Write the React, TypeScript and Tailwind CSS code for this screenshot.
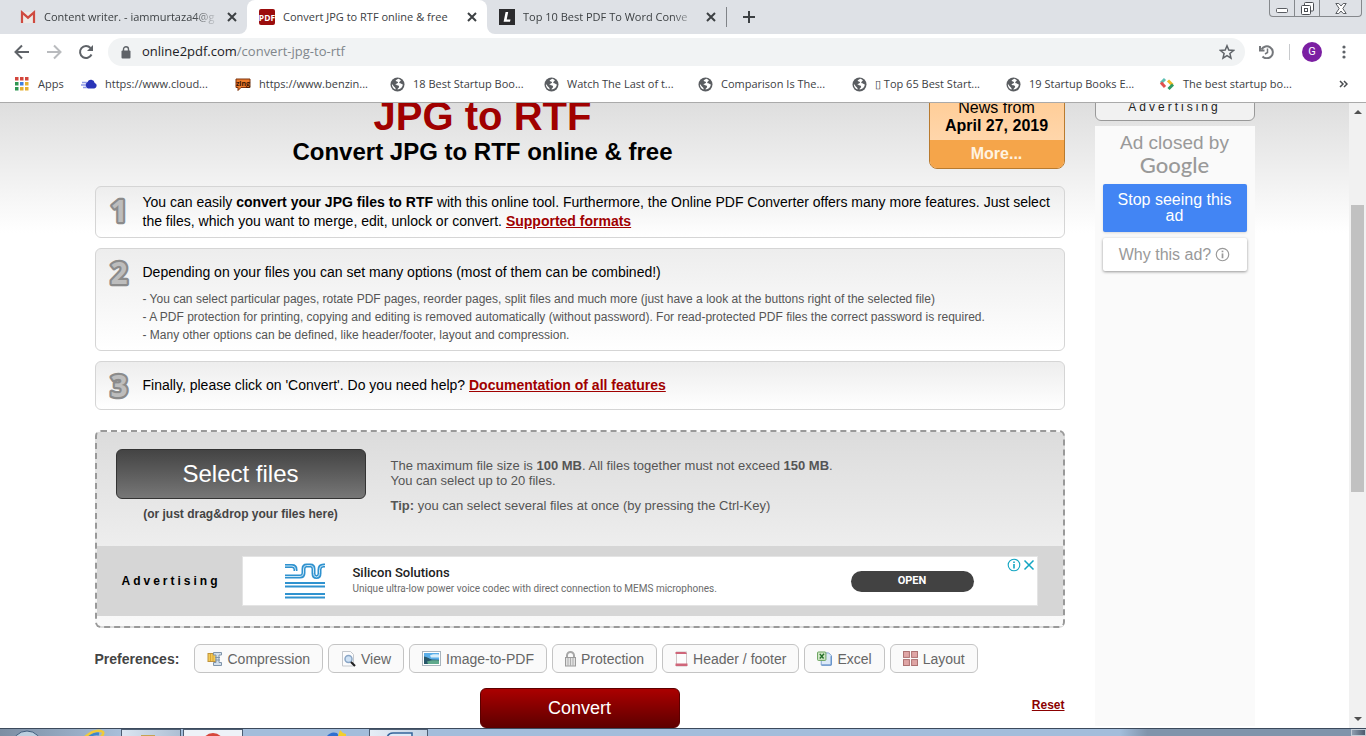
import type { ReactNode } from "react";

const strokeProps = {
  fill: "none",
  stroke: "currentColor",
  strokeWidth: 2,
} as const;

function CloseIcon() {
  return (
    <svg width="10" height="10" viewBox="0 0 10 10" {...strokeProps}>
      <path d="M1 1l8 8M9 1l-8 8" />
    </svg>
  );
}

function GmailIcon() {
  return (
    <svg width="16" height="16" viewBox="0 0 16 16">
      <path d="M1 3h14v11H1z" fill="#ece9e6" />
      <path d="M2 14V3.5l6 5.2 6-5.2V14" fill="none" stroke="#cf4a40" strokeWidth="2.2" />
    </svg>
  );
}

function PdfIcon() {
  return (
    <svg width="16" height="16" viewBox="0 0 16 16">
      <rect width="16" height="16" rx="2" fill="#9b0d0d" />
      <text x="8" y="11.5" fontSize="8.5" fontWeight="700" fill="#fff" textAnchor="middle" fontFamily="Open Sans, sans-serif">
        PDF
      </text>
    </svg>
  );
}

function LIcon() {
  return (
    <svg width="16" height="16" viewBox="0 0 16 16">
      <rect width="16" height="16" fill="#2b2b2d" />
      <path d="M6.6 3h2.6L7.7 10.6h3.8l-.5 2.2H4.6z" fill="#fff" />
    </svg>
  );
}

function GlobeIcon() {
  return (
    <svg width="15" height="15" viewBox="0 0 15 15">
      <circle cx="7.5" cy="7.5" r="7" fill="#5a5d61" />
      <path
        d="M8.2 1.8c-1 .7-2.4.9-2.6 2.200.8.7 2 .3 2.400 1.300.2 1.100-1.400 1.100-2.200 1.800-.6.8.5 1.200 1.300 1.200 1.300 0 2.400.8 1.900 2-.4.9-1.500 1-1.500 2.100 3-.2 5.200-2.400 5.400-5-.9.1-1.500-.5-2-.9-.6-.6-1.600-.3-1.700-1.100 0-.9 1.200-1.200 1.700-1.700C10.500 2.700 9.300 2.100 8.200 1.800zM1.900 7c-.2 2.600 1.400 4.900 3.700 5.600.3-1.200-.3-2-1.200-2.700C3.400 9 3 7.800 1.900 7z"
        fill="#fff"
      />
    </svg>
  );
}

function CloudIcon() {
  return (
    <svg width="16" height="12" viewBox="0 0 16 12">
      <path d="M7 10.500a3.500 3.500 0 0 1-.5-6.500 3.800 3.800 0 0 1 7.200.9 2.900 2.900 0 0 1-.4 5.600z" fill="#2a35b8" />
      <path d="M1 4.500h5M0 7h5M2 9.500h4" stroke="#8f9be6" strokeWidth="1.500" />
    </svg>
  );
}

function BenzingaIcon() {
  return (
    <svg width="16" height="13" viewBox="0 0 16 13">
      <path d="M1 1h14v8.500H6l-3 3V9.500H1z" fill="#ee7b2a" stroke="#7a3411" />
      <text x="8" y="8" fontSize="7" fontWeight="700" fill="#3a1503" textAnchor="middle" fontFamily="Open Sans, sans-serif">
        zing
      </text>
    </svg>
  );
}

function ChevronsIcon() {
  return (
    <svg width="16" height="14" viewBox="0 0 16 14" fill="none" strokeWidth="3">
      <path d="M6 2L2 6" stroke="#5fc0b4" />
      <path d="M2 5.500l4 4.500" stroke="#e2504e" />
      <path d="M9 3.500l4.500 4.500" stroke="#efb928" />
      <path d="M14 7.500L9.500 12" stroke="#2f9a63" />
    </svg>
  );
}

function AppsIcon() {
  const colors = ["#d3453b", "#d3453b", "#d3453b", "#2f9652", "#3f7fe0", "#e6b030", "#2f9652", "#e6b030", "#e6b030"];
  return (
    <svg width="14" height="14" viewBox="0 0 14 14">
      {colors.map((c, i) => (
        <rect key={i} x={(i % 3) * 5} y={Math.floor(i / 3) * 5} width="3.500" height="3.500" fill={c} />
      ))}
    </svg>
  );
}

function InfoIcon({ size }: { size: number }) {
  return (
    <svg width={size} height={size} viewBox="0 0 14 14" fill="none" stroke="currentColor">
      <circle cx="7" cy="7" r="5.800" strokeWidth="1.100" />
      <path d="M7 6v4.500" strokeWidth="1.600" />
      <path d="M7 3.400v1.500" strokeWidth="1.600" />
    </svg>
  );
}

function Tab({ icon, title, active, fade }: { icon: ReactNode; title: string; active?: boolean; fade?: boolean }) {
  return (
    <div
      className={
        active
          ? "flex h-full w-full items-center rounded-t-lg bg-white pr-2.5 pl-3"
          : "flex h-full w-[239px] items-center pr-2.5 pl-3"
      }
    >
      <span className="shrink-0">{icon}</span>
      <span
        className={
          fade
            ? "ml-2 min-w-0 flex-1 whitespace-nowrap [mask-image:linear-gradient(to_right,black_85%,transparent)]"
            : "ml-2 min-w-0 flex-1 whitespace-nowrap"
        }
      >
        {title}
      </span>
      <button aria-label={"Close " + title} className="ml-2 shrink-0 text-[#3c4043]">
        <CloseIcon />
      </button>
    </div>
  );
}

const bookmarks: { label: string; icon: ReactNode }[] = [
  { label: "https://www.cloud...", icon: <CloudIcon /> },
  { label: "https://www.benzin...", icon: <BenzingaIcon /> },
  { label: "18 Best Startup Boo...", icon: <GlobeIcon /> },
  { label: "Watch The Last of t...", icon: <GlobeIcon /> },
  { label: "Comparison Is The...", icon: <GlobeIcon /> },
  { label: "▯ Top 65 Best Start...", icon: <GlobeIcon /> },
  { label: "19 Startup Books E...", icon: <GlobeIcon /> },
  { label: "The best startup bo...", icon: <ChevronsIcon /> },
];

function BrowserChrome() {
  return (
    <header className="shrink-0 border-b border-[#aaaaaa] bg-white font-['Open_Sans',sans-serif] text-[11px] text-[#3c4043]">
      <div className="flex h-[34px] items-center">
        <div className="flex h-full w-[247px] shrink-0 rounded-br-lg bg-[#dee1e6] pl-2">
          <Tab icon={<GmailIcon />} title="Content writer. - iammurtaza4@g" fade />
        </div>
        <div className="h-full w-[240px] shrink-0 bg-[#dee1e6]">
          <Tab icon={<PdfIcon />} title="Convert JPG to RTF online & free" active />
        </div>
        <div className="flex h-full flex-1 items-center rounded-bl-lg bg-[#dee1e6]">
          <Tab icon={<LIcon />} title="Top 10 Best PDF To Word Conve" fade />
          <span className="h-5 w-px bg-[#808388]" />
          <button aria-label="New tab" className="ml-4">
            <svg width="12" height="12" viewBox="0 0 12 12" {...strokeProps}>
              <path d="M6 0v12M0 6h12" />
            </svg>
          </button>
          <div className="mr-1 ml-auto flex h-[17px] self-start rounded-b border border-t-0 border-[#85888c]">
            <button aria-label="Minimize" className="flex w-[25px] items-center justify-center border-r border-[#85888c] pt-1">
              <svg width="12" height="5" viewBox="0 0 12 5">
                <rect x=".5" y=".5" width="11" height="4" rx="1" fill="#fff" stroke="#5a5d62" />
              </svg>
            </button>
            <button aria-label="Restore" className="flex w-[25px] items-center justify-center border-r border-[#85888c]">
              <svg width="13" height="13" viewBox="0 0 13 13" fill="#fff" stroke="#4a4d52">
                <rect x="3.500" y=".5" width="9" height="8.500" rx="1" />
                <rect x=".5" y="3.500" width="9" height="9" rx="1" />
                <rect x="3.500" y="6.500" width="3" height="3" />
              </svg>
            </button>
            <button aria-label="Close window" className="flex w-[41px] items-center justify-center">
              <svg width="12" height="11" viewBox="0 0 12 11" fill="#fff" stroke="#5a5d62">
                <path d="M.8.5h3L6 3 8.200.5h3L7.800 5.500l3.400 5h-3L6 8l-2.200 2.500h-3l3.400-5z" />
              </svg>
            </button>
          </div>
        </div>
      </div>

      <div className="flex h-9 items-center pl-[14px] text-[#5f6368]">
        <button aria-label="Back">
          <svg width="16" height="16" viewBox="0 0 16 16" {...strokeProps}>
            <path d="M15 8H2M8 1.500L1.500 8 8 14.500" />
          </svg>
        </button>
        <button aria-label="Forward" className="ml-4 text-[#b9bbbe]">
          <svg width="16" height="16" viewBox="0 0 16 16" {...strokeProps}>
            <path d="M1 8h13M8 1.500L14.500 8 8 14.500" />
          </svg>
        </button>
        <button aria-label="Reload" className="ml-4">
          <svg width="16" height="16" viewBox="0 0 16 16">
            <path d="M13.500 10.500A6 6 0 1 1 12.500 4" fill="none" stroke="currentColor" strokeWidth="2" />
            <path d="M15 1v6H9z" fill="currentColor" />
          </svg>
        </button>
        <div className="ml-3.5 flex h-7 min-w-0 flex-1 items-center rounded-full bg-[#f1f3f4] pr-2.5 pl-[13px]">
          <svg width="10" height="13" viewBox="0 0 10 13">
            <rect x=".5" y="4.500" width="9" height="8" rx="1" fill="#5f6368" />
            <path d="M2.500 5V3.200a2.500 2.500 0 0 1 5 0V5" fill="none" stroke="#5f6368" strokeWidth="1.400" />
          </svg>
          <a href="#address" className="ml-[11px] flex-1 text-[13px] text-[#80868b]">
            <span className="text-[#202124]">online2pdf.com</span>/convert-jpg-to-rtf
          </a>
          <button aria-label="Bookmark this page">
            <svg width="16" height="16" viewBox="0 0 16 16" fill="none" stroke="currentColor" strokeWidth="1.500">
              <path d="M8 1.800l1.800 4.300 4.700.4-3.600 3 1.100 4.600L8 11.700l-4 2.400 1.100-4.600-3.600-3 4.700-.4z" />
            </svg>
          </button>
        </div>
        <button aria-label="History" className="ml-3.5">
          <svg width="16" height="14" viewBox="0 0 16 14" fill="none" stroke="#74777b" strokeWidth="2">
            <path d="M2.500 4.500A6 6 0 1 1 3.500 11.500" />
            <path d="M1 1v4.500h4.500" />
            <path d="M8.500 3.500V7.500l-2.500 1.500" strokeWidth="1.500" />
          </svg>
        </button>
        <span className="ml-3.5 h-4 w-px bg-[#c8cacd]" />
        <span className="ml-3 flex size-5 items-center justify-center rounded-full bg-[#7b1fa2] font-['Roboto',sans-serif] text-[11px] text-white">
          G
        </span>
        <button aria-label="Menu" className="mr-5 ml-5">
          <svg width="4" height="14" viewBox="0 0 4 14" fill="#5f6368">
            <circle cx="2" cy="2" r="1.600" />
            <circle cx="2" cy="7" r="1.600" />
            <circle cx="2" cy="12" r="1.600" />
          </svg>
        </button>
      </div>

      <nav className="flex h-8 items-center pb-1 pl-[15px] whitespace-nowrap">
        <a href="#apps" className="flex w-[66px] shrink-0 items-center gap-[9px]">
          <AppsIcon />
          Apps
        </a>
        {bookmarks.map((b) => (
          <a key={b.label} href="#bookmark" className="flex w-[154px] shrink-0 items-center gap-2">
            <span className="flex w-4 justify-center">{b.icon}</span>
            {b.label}
          </a>
        ))}
        <button aria-label="More bookmarks" className="mr-[18px] ml-auto">
          <svg width="9" height="8" viewBox="0 0 9 8" fill="none" stroke="#4a4d51" strokeWidth="1.500">
            <path d="M1 1l3 3-3 3M5 1l3 3-3 3" />
          </svg>
        </button>
      </nav>
    </header>
  );
}

function Step({ number, children }: { number: string; children: ReactNode }) {
  return (
    <section className="flex rounded-md border border-[#d5d5d5] bg-linear-to-b from-[#ededed] to-white">
      <svg width="24" height="30" viewBox="0 0 24 30" className="mt-[9px] ml-[11px] shrink-0">
        <text
          x="12"
          y="26"
          fontSize="30"
          fontWeight="700"
          textAnchor="middle"
          fontFamily="Open Sans, sans-serif"
          fill="#bdbdbd"
          stroke="#8b8b8b"
          strokeWidth="4.500"
          strokeLinejoin="round"
          paintOrder="stroke"
        >
          {number}
        </text>
      </svg>
      <div className="ml-3 flex-1 pr-2.5 text-sm leading-[19px]">{children}</div>
    </section>
  );
}

function RedLink({ children }: { children: ReactNode }) {
  return (
    <a href="#more" className="font-bold text-[#a00000] underline">
      {children}
    </a>
  );
}

const preferences: { label: string; icon: ReactNode }[] = [
  {
    label: "Compression",
    icon: (
      <svg width="16" height="16" viewBox="0 0 16 16">
        <rect x="1" y="2.500" width="10" height="8" fill="#f3ca56" stroke="#c0933a" />
        <path d="M3.500 3v7M6 3v7" stroke="#d9a436" />
        <path d="M6.500 1.500h8v2.500h-2.500v7.500h2.500v3h-8v-3H9V4H6.500z" fill="#d3e0ec" stroke="#8094aa" />
        <path d="M8 6.500h5M8 9h5" stroke="#8094aa" />
      </svg>
    ),
  },
  {
    label: "View",
    icon: (
      <svg width="15" height="16" viewBox="0 0 15 16">
        <path d="M1.500.5h8l3 3v11.500h-11z" fill="#fbfbfc" stroke="#c3c7cc" />
        <circle cx="7.500" cy="8" r="3.500" fill="#cfe2f5" stroke="#8aa6c6" strokeWidth="1.500" />
        <path d="M10 11l4 4" stroke="#222" strokeWidth="2.200" />
      </svg>
    ),
  },
  {
    label: "Image-to-PDF",
    icon: (
      <svg width="19" height="15" viewBox="0 0 19 15">
        <rect x=".5" y=".5" width="18" height="14" fill="#fff" stroke="#a9b4bd" />
        <rect x="2" y="2" width="15" height="11" fill="#5aaee8" />
        <path d="M8 4.500c2-1.500 5-1.500 9-1v3H9z" fill="#d9effb" />
        <path d="M2 5.500c3 0 5 2.500 8 3l7 .3V13H2z" fill="#27576a" />
        <path d="M5 10.500c4-1.500 8-1.500 12-1V13H6z" fill="#5fa98c" />
      </svg>
    ),
  },
  {
    label: "Protection",
    icon: (
      <svg width="11" height="16" viewBox="0 0 11 16" fill="none">
        <path d="M2 8V4.500a3.500 3.500 0 0 1 7 0V8" stroke="#a7a7a7" strokeWidth="2" />
        <rect x=".5" y="6.500" width="10" height="8.500" fill="#e2e2e2" stroke="#9a9a9a" />
        <path d="M3 7v8M5.500 7v8M8 7v8" stroke="#adadad" />
      </svg>
    ),
  },
  {
    label: "Header / footer",
    icon: (
      <svg width="13" height="16" viewBox="0 0 13 16">
        <rect x="1.500" y="1" width="10" height="14" fill="#fcfcfc" stroke="#d0c4c6" />
        <path d="M.5 1h10l1.500 2H.5zM.5 12.500h12V15H.5z" fill="#cf6579" />
      </svg>
    ),
  },
  {
    label: "Excel",
    icon: (
      <svg width="15" height="16" viewBox="0 0 16 16">
        <path d="M4.500 1.500h8l3 3v10h-11z" fill="#dce9f8" stroke="#7ba0cf" />
        <path d="M5 14.500h10M15 5v9" stroke="#4f83c4" />
        <rect x=".5" y=".5" width="9" height="9" rx="1" fill="#cfe6c6" stroke="#64a058" />
        <path d="M3 2.500l4 5M7.500 2.500L3 7.500" stroke="#25702a" strokeWidth="1.500" />
      </svg>
    ),
  },
  {
    label: "Layout",
    icon: (
      <svg width="15" height="15" viewBox="0 0 15 15" fill="#dfa5a5" stroke="#ad7272">
        <rect x=".5" y=".5" width="5.900" height="5.900" />
        <rect x="8.600" y=".5" width="5.900" height="5.900" />
        <rect x=".5" y="8.600" width="5.900" height="5.900" />
        <rect x="8.600" y="8.600" width="5.900" height="5.900" />
      </svg>
    ),
  },
];

function SiliconLogo() {
  return (
    <svg width="40" height="36" viewBox="0 0 40 36" fill="none" stroke="#2f92cf">
      <g strokeWidth="4">
        <path d="M0 3h7q3.500 0 3.500 3.500V8" />
        <path d="M0 13.500h15q3.500 0 3.500-3.500V6q0-3.500 3-3.500h4q3 0 3 3.500v4.500q0 3.500 3 3.500t3-3.500V6.500q0-4 4-4h1.500" />
      </g>
      <g stroke="#cbe6f6" strokeWidth="1">
        <path d="M0 3h7q3.500 0 3.500 3.500V8" />
        <path d="M0 13.500h15q3.500 0 3.500-3.500V6q0-3.500 3-3.500h4q3 0 3 3.500v4.500q0 3.500 3 3.500t3-3.500V6.500q0-4 4-4h1.500" />
      </g>
      <path d="M0 20h40M0 23.500h40M0 31h40M0 34.500h40" strokeWidth="2" />
    </svg>
  );
}

function DropZone() {
  return (
    <section className="mt-5 rounded-md border-2 border-dashed border-[#999999] bg-linear-to-b from-[#dcdcdc] to-[#fafafa] pb-2.5">
      <div className="flex h-[114px] pt-[17px] pl-[19px]">
        <div className="w-[250px] shrink-0 text-center">
          <button className="h-[50px] w-full rounded-md border border-[#333333] bg-linear-to-b from-[#444444] to-[#777777] text-2xl text-white">
            Select files
          </button>
          <p className="mt-[7px] text-xs leading-4 font-bold text-[#444444]">(or just drag&amp;drop your files here)</p>
        </div>
        <div className="ml-[25px] pt-[9px] text-[13px] leading-[15px] text-[#555555]">
          <p>
            The maximum file size is <b>100 MB</b>. All files together must not exceed <b>150 MB</b>.
          </p>
          <p>You can select up to 20 files.</p>
          <p className="mt-2.5">
            <b>Tip:</b> you can select several files at once (by pressing the Ctrl-Key)
          </p>
        </div>
      </div>
      <div className="flex items-center bg-[#d6d6d6] py-2.5 pr-[25px] pl-[25px]">
        <span className="w-[120px] shrink-0 text-xs font-bold tracking-[3px] text-black">Advertising</span>
        <div className="flex h-[50px] flex-1 items-center border border-[#e4e4e4] bg-white pl-[42px] font-['Roboto',sans-serif]">
          <SiliconLogo />
          <div className="ml-7 w-[498px]">
            <p className="text-[13px] leading-4 font-medium text-[#212121]">Silicon Solutions</p>
            <p className="text-[10px] leading-4 text-[#6b6b6b]">
              Unique ultra-low power voice codec with direct connection to MEMS microphones.
            </p>
          </div>
          <button className="h-[21px] w-[123px] rounded-full bg-[#424242] text-[11px] font-bold text-white">OPEN</button>
          <div className="mr-0.5 ml-auto flex items-center gap-0.5 self-start pt-px text-[#12a5c2]">
            <button aria-label="Ad information">
              <InfoIcon size={14} />
            </button>
            <button aria-label="Close ad">
              <svg width="12" height="12" viewBox="0 0 12 12" fill="none" stroke="currentColor" strokeWidth="1.500">
                <path d="M1.500 1.500l9 9M10.500 1.500l-9 9" />
              </svg>
            </button>
          </div>
        </div>
      </div>
    </section>
  );
}

function Converter() {
  return (
    <main className="w-[970px]">
      <div className="mb-[17px] flex">
        <div className="flex-1 pt-3.5 text-center font-bold">
          <h1 className="text-[40px] leading-[44px] text-[#a00000]">JPG to RTF</h1>
          <h2 className="text-2xl leading-7 text-black">Convert JPG to RTF online &amp; free</h2>
        </div>
        <aside className="ml-[58px] w-[136px] overflow-hidden rounded-lg border border-[#b97a2e] bg-linear-to-b from-[#ffc98e] to-[#ffdcb8] text-center text-base leading-[18px] text-black">
          <div className="pt-[18px] pb-[5px]">
            <p>News from</p>
            <p className="font-bold">April 27, 2019</p>
          </div>
          <a href="#news" className="block bg-[#f5a54a] leading-7 font-bold text-[#fff3e2]">
            More...
          </a>
        </aside>
      </div>

      <div className="flex flex-col gap-2.5">
        <Step number="1">
          <p className="py-1.5">
            You can easily <b>convert your JPG files to RTF</b> with this online tool. Furthermore, the Online PDF
            Converter offers many more features. Just select the files, which you want to merge, edit, unlock or
            convert. <RedLink>Supported formats</RedLink>
          </p>
        </Step>
        <Step number="2">
          <p className="pt-3.5">Depending on your files you can set many options (most of them can be combined!)</p>
          <ul className="pt-2 pb-1.5 text-xs leading-[18px] text-[#555555]">
            <li>
              - You can select particular pages, rotate PDF pages, reorder pages, split files and much more (just have a
              look at the buttons right of the selected file)
            </li>
            <li>
              - A PDF protection for printing, copying and editing is removed automatically (without password). For
              read-protected PDF files the correct password is required.
            </li>
            <li>- Many other options can be defined, like header/footer, layout and compression.</li>
          </ul>
        </Step>
        <Step number="3">
          <p className="py-3.5">
            Finally, please click on 'Convert'. Do you need help? <RedLink>Documentation of all features</RedLink>
          </p>
        </Step>
      </div>

      <DropZone />

      <div className="mt-4 flex items-center gap-[5px] text-sm leading-[18px]">
        <span className="w-[94px] font-bold text-[#444444]">Preferences:</span>
        {preferences.map((p) => (
          <button
            key={p.label}
            className="flex h-[29px] items-center gap-[5px] rounded-md border border-[#c4c4c4] bg-[#fafafa] px-3 whitespace-nowrap text-[#666666]"
          >
            {p.icon}
            {p.label}
          </button>
        ))}
      </div>

      <div className="mt-[15px] flex items-start">
        <span className="flex-1" />
        <button className="h-10 w-[200px] rounded-md border border-[#5c0000] bg-linear-to-b from-[#ab0000] to-[#5f0000] text-lg text-white">
          Convert
        </button>
        <a href="#reset" className="flex-1 pt-[9px] text-right text-xs leading-4 font-bold text-[#8b0000] underline">
          Reset
        </a>
      </div>
    </main>
  );
}

function Sidebar() {
  return (
    <aside className="flex w-40 flex-col text-center">
      <div className="rounded-b-md border border-[#999999] bg-[#f1f1f1] pt-[18px] pb-[5px] text-xs leading-4 tracking-[3px] text-[#222222]">
        Advertising
      </div>
      <div className="mt-[5px] h-[600px] bg-[#fafafa] px-2 pt-1.5 text-[#999999]">
        <p className="text-[19px] leading-[22px]">Ad closed by</p>
        <p className="font-['Lato',sans-serif] text-[22px] leading-[22px] font-medium">Google</p>
        <button className="mt-2 h-12 w-36 rounded-xs bg-[#4285f4] px-3 text-base leading-4 text-white shadow-sm">
          Stop seeing this ad
        </button>
        <button className="mt-1.5 flex h-[33px] w-36 items-center justify-center gap-1 rounded-xs bg-white text-base shadow-[0_1px_3px_rgba(0,0,0,0.4)]">
          Why this ad? <InfoIcon size={15} />
        </button>
      </div>
    </aside>
  );
}

function Scrollbar() {
  return (
    <div className="flex w-[17px] shrink-0 flex-col items-center bg-[#f1f1f1] py-[7px]">
      <svg width="8" height="4" viewBox="0 0 8 4" fill="#505050">
        <path d="M0 4l4-4 4 4z" />
      </svg>
      <div className="mt-[91px] h-[287px] w-[13px] bg-[#c1c1c1]" />
      <svg width="8" height="4" viewBox="0 0 8 4" fill="#505050" className="mt-auto">
        <path d="M0 0l4 4 4-4z" />
      </svg>
    </div>
  );
}

function Taskbar() {
  return (
    <footer className="flex h-2 shrink-0 overflow-hidden border-t border-[#3c4a5c] bg-linear-to-r from-[#a3bddb] from-82% to-[#8094ab] to-84%">
      <div className="flex w-[121px] items-start gap-[42px] bg-linear-to-r from-[#7c8ea3] to-[#a9bfda] pl-3">
        <svg width="30" height="7" viewBox="0 0 30 7">
          <circle cx="15" cy="17" r="15" fill="#bccfdf" stroke="#3f5c7c" />
        </svg>
        <svg width="22" height="7" viewBox="0 0 22 7" fill="none">
          <path d="M3 9q5-5 12-4" stroke="#3f86cc" strokeWidth="3" />
          <path d="M1 8Q12-1 19 3q1 2-2 5" stroke="#f0cb3a" strokeWidth="2.500" />
        </svg>
      </div>
      <div className="flex w-15 justify-center border border-b-0 border-[#4d5d72] bg-linear-to-r from-[#dbe6f2] to-[#aebfd4]">
        <svg width="24" height="7" viewBox="0 0 24 7">
          <path d="M2 7V5h14v2z" fill="#c6a352" />
        </svg>
      </div>
      <div className="ml-[2px] flex w-15 justify-center border border-b-0 border-[#4d5d72] bg-[#eef2f8]">
        <svg width="24" height="7" viewBox="0 0 24 7">
          <circle cx="12" cy="14" r="11" fill="#d6473c" />
        </svg>
      </div>
      <svg width="22" height="7" viewBox="0 0 22 7" className="ml-[83px]">
        <path d="M1 7q4-5 10-3l2 3z" fill="#2f6fd0" />
        <path d="M12 7l2-6 3 3 3 1v2z" fill="#f2cf2c" />
      </svg>
      <div className="ml-[21px] flex w-[59px] justify-center border border-b-0 border-[#4d5d72] bg-linear-to-r from-[#e6eef7] to-[#c3d2e4]">
        <svg width="30" height="7" viewBox="0 0 30 7">
          <path d="M3 8q1-5 6-5h19v5z" fill="#dfeaf7" stroke="#35649b" strokeWidth="1.500" />
        </svg>
      </div>
      <button aria-label="Show desktop" className="ml-auto w-[15px] border border-[#c3ccd6] bg-linear-to-r from-[#8f9fb1] to-[#4c5b6e]" />
    </footer>
  );
}

export default function App() {
  return (
    <div className="flex h-screen flex-col overflow-hidden bg-white font-['Liberation_Sans',Arial,sans-serif] text-black">
      <BrowserChrome />
      <div className="flex min-h-0 flex-1">
        <div className="min-w-0 flex-1 overflow-hidden bg-white bg-linear-to-b from-[#dedede] to-white to-[130px]">
          <div className="-mt-[23px] flex justify-center gap-[30px]">
            <Converter />
            <Sidebar />
          </div>
        </div>
        <Scrollbar />
      </div>
      <Taskbar />
    </div>
  );
}
